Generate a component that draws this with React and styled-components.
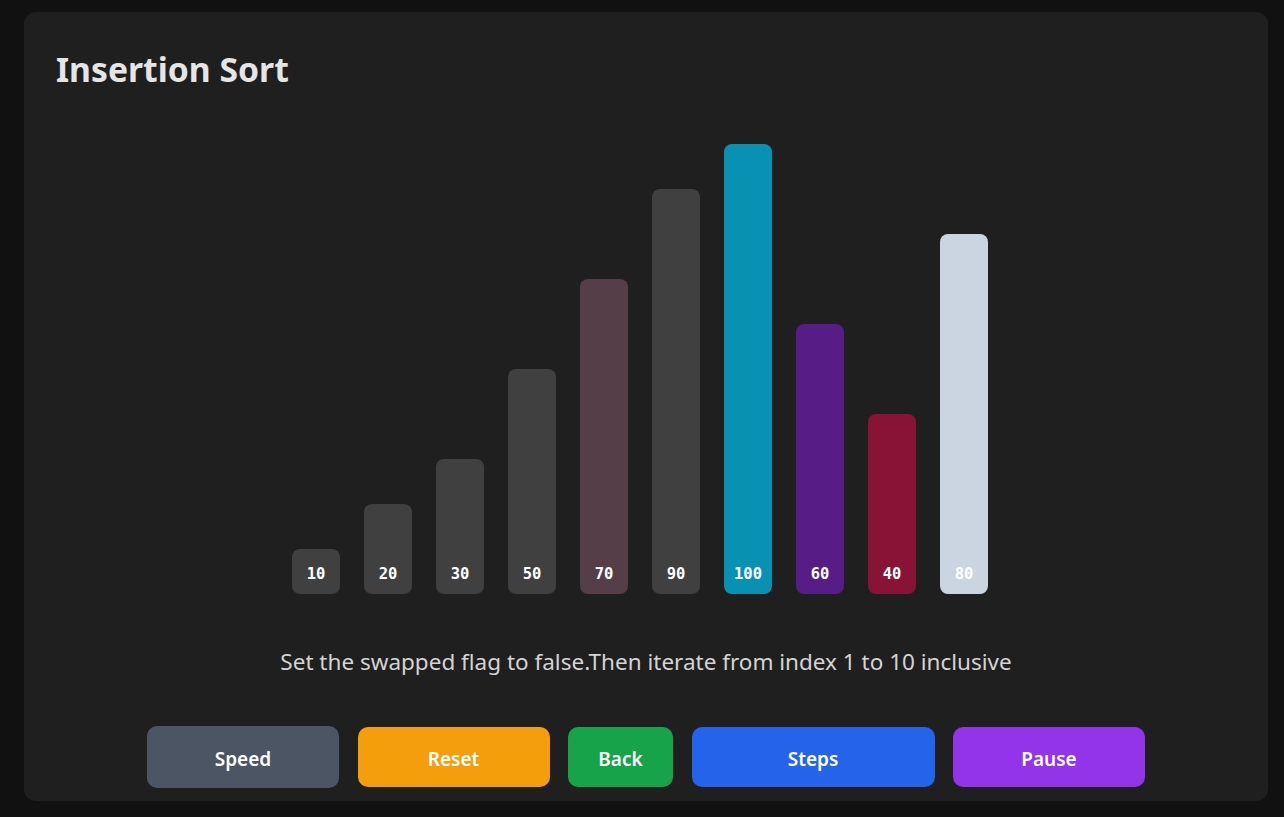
import styled, { createGlobalStyle } from "styled-components";

const GlobalStyle = createGlobalStyle`
  body {
    margin: 0;
    background: #111111;
    font-family: "Noto Sans", "Open Sans", sans-serif;
  }
`;

const bars = [
  { value: 10, color: "#404040" },
  { value: 20, color: "#404040" },
  { value: 30, color: "#404040" },
  { value: 50, color: "#404040" },
  { value: 70, color: "#553e48" },
  { value: 90, color: "#404040" },
  { value: 100, color: "#0891b2" },
  { value: 60, color: "#581c87" },
  { value: 40, color: "#881337" },
  { value: 80, color: "#cbd5e1" },
];

const buttons = [
  { label: "Speed", color: "#4b5563", width: 192, big: true },
  { label: "Reset", color: "#f59e0b", width: 192 },
  { label: "Back", color: "#16a34a", width: 105 },
  { label: "Steps", color: "#2563eb", width: 243 },
  { label: "Pause", color: "#9333ea", width: 192 },
];

const App = () => {
  return (
    <Page>
      <GlobalStyle />
      <Card>
        <Title>Insertion Sort</Title>
        <Chart>
          {bars.map((b) => (
            <Bar key={b.value} $color={b.color} style={{ height: b.value * 4.5 }}>
              <BarLabel>{b.value}</BarLabel>
            </Bar>
          ))}
        </Chart>
        <Caption>Set the swapped flag to false.Then iterate from index 1 to 10 inclusive</Caption>
        <Controls>
          {buttons.map((b) => (
            <Button key={b.label} $color={b.color} $width={b.width} $big={b.big}>
              {b.label}
            </Button>
          ))}
        </Controls>
      </Card>
    </Page>
  );
};

const Page = styled.div`
  padding: 12px 16px 16px 24px;
  min-height: 817px;
  box-sizing: border-box;
`;

const Card = styled.div`
  background: #1f1f1f;
  border-radius: 12px;
  height: 789px;
  box-sizing: border-box;
  padding: 30px 32px 13px;
  display: flex;
  flex-direction: column;
`;

const Title = styled.h1`
  margin: 0;
  font-size: 33.7px;
  line-height: 54px;
  font-weight: 700;
  color: #e5e5e5;
`;

const Chart = styled.div`
  display: flex;
  justify-content: center;
  align-items: flex-end;
  gap: 24px;
  height: 450px;
  margin-top: 48px;
  padding-right: 12px;
`;

const Bar = styled.div`
  width: 48px;
  background: ${({ $color }) => $color};
  border-radius: 8px;
  display: flex;
  align-items: flex-end;
  justify-content: center;
`;

const BarLabel = styled.span`
  font-family: "DejaVu Sans Mono", "Liberation Mono", monospace;
  font-weight: 700;
  font-size: 15.5px;
  line-height: 20px;
  color: #ffffff;
  margin-bottom: 10px;
`;

const Caption = styled.p`
  margin: 53px 0 0;
  text-align: center;
  font-size: 22.5px;
  line-height: 30px;
  color: #d4d4d4;
`;

const Controls = styled.div`
  display: flex;
  justify-content: center;
  align-items: center;
  gap: 18.5px;
  margin-top: auto;
`;

const Button = styled.button`
  width: ${({ $width }) => $width}px;
  height: ${({ $big }) => ($big ? 62 : 60)}px;
  padding: 3px 0 0;
  border: none;
  border-radius: 10px;
  background: ${({ $color }) => $color};
  color: #ffffff;
  font-family: "Noto Sans", "Open Sans", sans-serif;
  font-size: 19px;
  font-weight: 600;
  cursor: pointer;
`;

export default App;
